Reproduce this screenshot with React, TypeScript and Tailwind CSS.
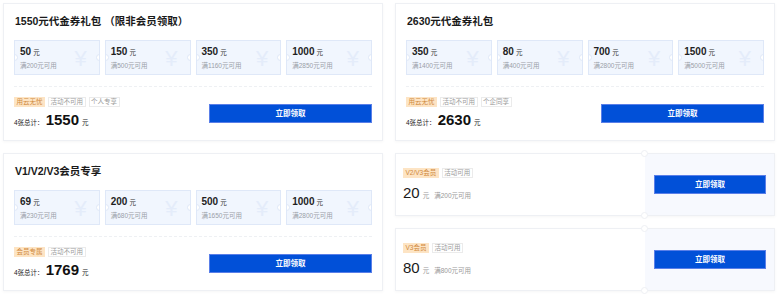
import React from "react";

type Tag = { text: string; hot?: boolean };

const Coupon = ({ amount, cond }: { amount: string; cond: string }) => (
  <div className="relative h-[35px] w-[86px] overflow-hidden border border-[#dfe8f8] bg-[#f1f6fe] px-[5px] pt-[5px]">
    <div className="absolute right-[12px] top-[7px] text-[22px] font-light leading-[22px] text-[#e4ecfa]">¥</div>
    <div className="relative flex h-[12px] items-baseline">
      <span className="text-[10px] font-bold leading-[12px] text-[#1f1f1f]">{amount}</span>
      <span className="ml-[2px] text-[6.5px] leading-[8px] text-[#333]">元</span>
    </div>
    <div className="relative mt-[3px] text-[6.5px] leading-[9px] text-[#9aa0a8]">{cond}</div>
    <div className="absolute left-[-4px] top-[13px] h-[7px] w-[7px] rounded-full border border-[#dfe8f8] bg-white" />
    <div className="absolute right-[-4px] top-[13px] h-[7px] w-[7px] rounded-full border border-[#dfe8f8] bg-white" />
  </div>
);

const Tags = ({ tags }: { tags: Tag[] }) => (
  <div className="flex h-[10px] gap-[3px]">
    {tags.map((t) =>
      t.hot ? (
        <span
          key={t.text}
          className="flex h-[10px] items-center border border-[#fde4c4] bg-[#fde4c4] px-[1.5px] text-[6.5px] leading-[8px] text-[#d0893c]"
        >
          {t.text}
        </span>
      ) : (
        <span
          key={t.text}
          className="flex h-[10px] items-center border border-[#ebebeb] bg-white px-[1.5px] text-[6.5px] leading-[8px] text-[#9a9a9a]"
        >
          {t.text}
        </span>
      )
    )}
  </div>
);

const Button = ({ w }: { w: string }) => (
  <div
    className={`flex h-[19px] items-center justify-center border border-[#5a7fe8] bg-[#0150d8] text-[7.5px] font-semibold text-white ${w}`}
  >
    立即领取
  </div>
);

const BigCard = ({
  title,
  coupons,
  tags,
  total,
}: {
  title: string;
  coupons: [string, string][];
  tags: Tag[];
  total: string;
}) => (
  <div className="h-[138px] w-[380px] border border-[#eef0f4] bg-white px-[10px] pt-[8px] shadow-[0_1px_3px_rgba(0,0,0,0.04)]">
    <div className="h-[18px] pl-[1px] text-[10.5px] font-semibold leading-[18px] text-[#1a1a1a]">{title}</div>
    <div className="mt-[10px] flex gap-[5px]">
      {coupons.map(([a, c]) => (
        <Coupon key={a} amount={a} cond={c} />
      ))}
    </div>
    <div className="mt-[11px] border-t border-dashed border-[#eef0f3]" />
    <div className="mt-[10px] flex items-start justify-between">
      <div className="flex flex-col">
        <Tags tags={tags} />
        <div className="mt-[5px] flex h-[16px] items-baseline">
          <span className="text-[6.5px] leading-[8px] text-[#222]">4张总计：</span>
          <span className="ml-[2px] text-[15px] font-bold leading-[16px] text-[#111]">{total}</span>
          <span className="ml-[3px] text-[6.5px] leading-[8px] text-[#222]">元</span>
        </div>
      </div>
      <div className="mt-[7px]">
        <Button w="w-[163px]" />
      </div>
    </div>
  </div>
);

const SmallCard = ({ tags, amount, cond }: { tags: Tag[]; amount: string; cond: string }) => (
  <div className="flex h-[63px] w-[380px] border border-[#eef0f4] bg-white shadow-[0_1px_3px_rgba(0,0,0,0.04)]">
    <div className="flex-1 pl-[7px] pt-[14px]">
      <Tags tags={tags} />
      <div className="mt-[6px] flex h-[18px] items-baseline">
        <span className="text-[15px] leading-[18px] text-[#1a1a1a]">{amount}</span>
        <span className="ml-[3px] text-[6.5px] leading-[8px] text-[#999]">元</span>
        <span className="ml-[5px] text-[6.5px] leading-[8px] text-[#999]">{cond}</span>
      </div>
    </div>
    <div className="relative flex w-[129px] items-center bg-[#f7f9fe] pl-[9px]">
      <div className="absolute left-[-4px] top-[-4px] h-[7px] w-[7px] rounded-full border border-[#eef0f4] bg-white" />
      <div className="absolute bottom-[-4px] left-[-4px] h-[7px] w-[7px] rounded-full border border-[#eef0f4] bg-white" />
      <Button w="w-[112px]" />
    </div>
  </div>
);

export default function App() {
  return (
    <div className="h-[296px] w-[780px] bg-white pl-[3px] pt-[3px] font-['Liberation_Sans','Noto_Sans_CJK_SC',sans-serif]">
      <div className="grid grid-cols-[380px_380px] gap-[12px]">
        <BigCard
          title="1550元代金券礼包 （限非会员领取）"
          coupons={[
            ["50", "满200元可用"],
            ["150", "满500元可用"],
            ["350", "满1160元可用"],
            ["1000", "满2850元可用"],
          ]}
          tags={[{ text: "用云无忧", hot: true }, { text: "活动不可用" }, { text: "个人专享" }]}
          total="1550"
        />
        <BigCard
          title="2630元代金券礼包"
          coupons={[
            ["350", "满1400元可用"],
            ["80", "满400元可用"],
            ["700", "满2800元可用"],
            ["1500", "满5000元可用"],
          ]}
          tags={[{ text: "用云无忧", hot: true }, { text: "活动不可用" }, { text: "个企同享" }]}
          total="2630"
        />
        <BigCard
          title="V1/V2/V3会员专享"
          coupons={[
            ["69", "满230元可用"],
            ["200", "满680元可用"],
            ["500", "满1650元可用"],
            ["1000", "满2800元可用"],
          ]}
          tags={[{ text: "会员专属", hot: true }, { text: "活动不可用" }]}
          total="1769"
        />
        <div className="flex flex-col gap-[12px]">
          <SmallCard tags={[{ text: "V2/V3会员", hot: true }, { text: "活动可用" }]} amount="20" cond="满200元可用" />
          <SmallCard tags={[{ text: "V3会员", hot: true }, { text: "活动可用" }]} amount="80" cond="满800元可用" />
        </div>
      </div>
    </div>
  );
}
